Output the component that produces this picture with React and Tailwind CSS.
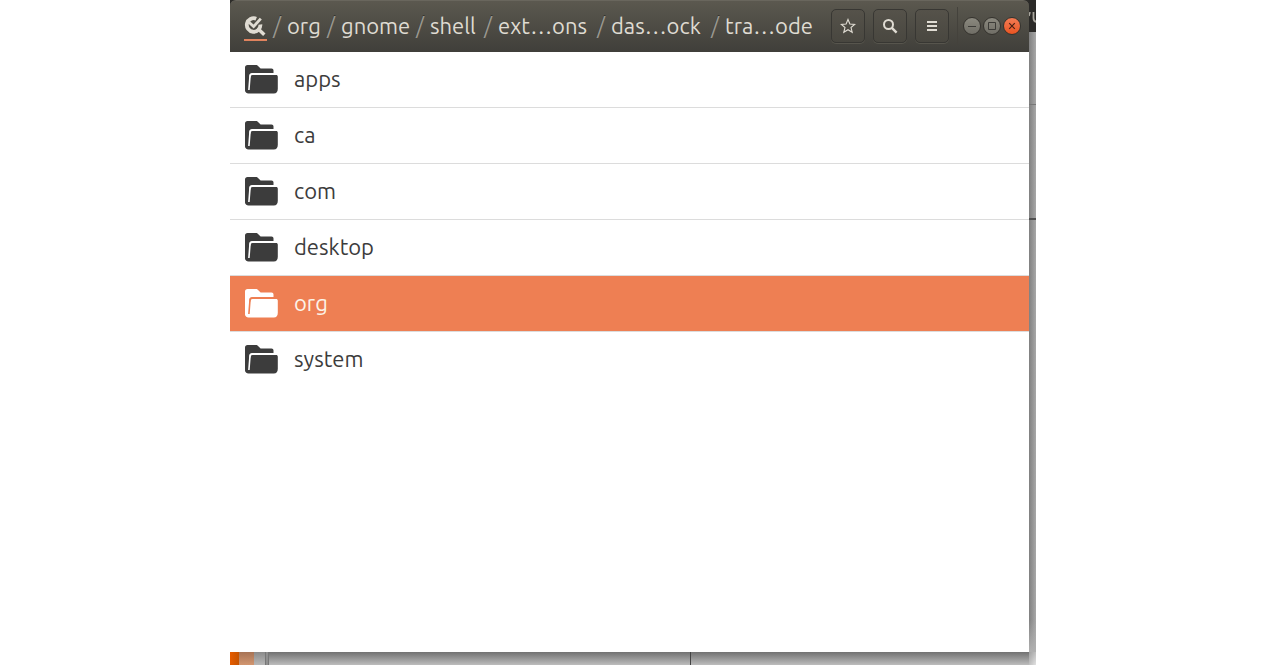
import React from "react";

const crumbs = [
  { name: "org", width: "w-[34px]" },
  { name: "gnome", width: "w-[69px]" },
  { name: "shell", width: "w-[48px]" },
  { name: "ext…ons", width: "w-[93px]" },
  { name: "das…ock", width: "w-[94px]" },
  { name: "tra…ode", width: "w-[90px]" },
];

const folders = ["apps", "ca", "com", "desktop", "org", "system"];

function RootIcon() {
  return (
    <svg viewBox="0 0 22 22" className="h-[22px] w-[22px]" fill="none" stroke="#e0dcd3" aria-hidden="true">
      <path d="M12.200 3.700A6.800 6.800 0 1 0 16.400 9.500" strokeWidth="3.800" />
      <path d="M5 7.200l4.600 4.400 7.200-8" strokeWidth="2.800" />
      <path d="M13.500 13.200l6.800 6.600" strokeWidth="3.400" />
    </svg>
  );
}

function FolderIcon({ selected }) {
  return (
    <svg
      viewBox="0 0 34 30"
      className={selected ? "h-[30px] w-[34px] shrink-0 text-white" : "h-[30px] w-[34px] shrink-0"}
      fill="currentColor"
      aria-hidden="true"
    >
      <path d="M3.500 1H12c1 0 1.500.4 2.300 1.200L16.600 4.500H27.500c1.200 0 2 .8 2 2v3H8c-1.600 0-2.500.9-2.600 2.500L4.500 28.800C2.300 28.500 1 27.200 1 25V3.500C1 2 2 1 3.500 1z" />
      <path d="M8.500 11h23.500c1.200 0 1.800.6 1.800 1.800v12c0 3-1.300 4.700-4 4.700H4.500C2.500 29.500 1 28 1 26l5.500-13c.1-1.300.8-2 2-2z" />
      <path d="M4.900 26L6 12c.1-1.400.9-2.100 2.200-2.100H32" fill="none" stroke={selected ? "#ee7f53" : "#ffffff"} strokeWidth="1.600" />
    </svg>
  );
}

function ToolButton({ label, children }) {
  return (
    <button
      aria-label={label}
      className="flex h-[34px] w-[34px] items-center justify-center rounded-[5px] border border-[#383733] bg-linear-to-b from-[#55524a] to-[#494740] text-[#e0dcd3] shadow-[0_1px_0_#57554d]"
    >
      <svg viewBox="0 0 16 16" className="h-4 w-4" fill="none" stroke="currentColor" aria-hidden="true">
        {children}
      </svg>
    </button>
  );
}

function WindowButton({ label, close, children }) {
  return (
    <button
      aria-label={label}
      className={
        close
          ? "h-[18px] w-[18px] rounded-full border border-[#35332e] bg-linear-to-b from-[#f47b53] to-[#e95420] text-[#4b2114]"
          : "h-[18px] w-[18px] rounded-full border border-[#35332e] bg-linear-to-b from-[#8b897f] to-[#706e66] text-[#3c3b37]"
      }
    >
      <svg viewBox="0 0 16 16" className="h-4 w-4" fill="none" stroke="currentColor" aria-hidden="true">
        {children}
      </svg>
    </button>
  );
}

function Header() {
  return (
    <header className="flex h-[52px] items-center rounded-t-md border-t border-[#69665d] bg-linear-to-b from-[#5b584f] to-[#403f3a] pr-2 pb-0.5 pl-3.5">
      <nav aria-label="Path" className="flex grow items-center text-[22px] leading-7 text-[#dfdbd2] [text-shadow:0_-1px_0_#35342f]">
        <button aria-label="Root" className="mt-0.5 flex h-7 w-[23px] items-start border-b-2 border-[#e0835e] pt-0.5">
          <RootIcon />
        </button>
        {crumbs.map((crumb) => (
          <React.Fragment key={crumb.name}>
            <span className="w-5 text-center leading-7 text-[#99978f]">/</span>
            <button className={`${crumb.width} text-left whitespace-nowrap`}>{crumb.name}</button>
          </React.Fragment>
        ))}
      </nav>
      <div className="flex shrink-0 gap-2">
        <ToolButton label="Bookmark">
          <path d="M8 1.500l1.900 4.500 4.800.4-3.700 3.100 1.200 4.800L8 11.700l-4.200 2.600L5 9.500 1.300 6.400 6.100 6z" strokeWidth="1.100" />
        </ToolButton>
        <ToolButton label="Search">
          <circle cx="6.500" cy="6.500" r="4.500" strokeWidth="2" />
          <path d="M9.600 9.600l5 5" strokeWidth="2.400" />
        </ToolButton>
        <ToolButton label="Menu">
          <path d="M3 4h10M3 8h10M3 12h10" strokeWidth="2" />
        </ToolButton>
      </div>
      <div className="ml-2 h-[38px] w-px shrink-0 bg-[#44423c]" />
      <div className="ml-[5px] flex shrink-0 gap-0.5">
        <WindowButton label="Minimize"><path d="M4 8.500h8" /></WindowButton>
        <WindowButton label="Maximize"><path d="M4.500 4.500h7v7h-7z" /></WindowButton>
        <WindowButton label="Close" close><path d="M5.200 5.200l5.600 5.600M10.800 5.200l-5.600 5.600" strokeWidth="1.200" /></WindowButton>
      </div>
    </header>
  );
}

export default function App() {
  return (
    <div className="min-h-screen bg-white pr-[244px] pl-[230px] font-['Ubuntu','Noto_Sans',sans-serif]">
      <div className="grid min-h-screen grid-cols-[minmax(0,1fr)_7px] grid-rows-[1fr_13px] overflow-hidden">
        <main className="flex flex-col bg-linear-to-b from-[#2d2c29] from-50% to-white to-50%">
          <Header />
          <ul className="grow bg-white">
            {folders.map((name) => (
              <li key={name} className={name === "system" ? "" : "border-b border-[#dcdcdc]"}>
                <button
                  className={
                    name === "org"
                      ? "flex h-[55px] w-full items-center gap-4 bg-[#ee7f53] pb-0.5 pl-3.5 text-[22px] leading-7 text-[#fcf3e8]"
                      : "flex h-[55px] w-full items-center gap-4 pb-0.5 pl-3.5 text-[22px] leading-7 text-[#3c3c3c]"
                  }
                >
                  <FolderIcon selected={name === "org"} />
                  {name}
                </button>
              </li>
            ))}
          </ul>
        </main>
        <div className="flex flex-col bg-linear-to-r from-[#808080] to-[#a8a8a8]">
          <div className="h-8 shrink-0 bg-[#2b2a28] pt-3">
            <svg viewBox="0 0 7 12" className="h-3 w-[7px]" fill="none" stroke="#aaa79f" aria-hidden="true">
              <path d="M0 4l1-4" strokeWidth="1.500" />
              <path d="M4.500 0v6c0 3 1.500 4 4 4" strokeWidth="1.800" />
            </svg>
          </div>
          <div className="h-[73px] shrink-0 border-b border-[#777777]" />
          <div className="h-[115px] shrink-0 border-b-2 border-[#505050]" />
          <div className="mt-auto h-8 bg-linear-to-b from-transparent to-[#b0b0b0]" />
        </div>
        <div className="flex bg-linear-to-b from-[#727272] to-[#bdbdbd]">
          <div className="w-[9px] bg-linear-to-r from-[#e65c00] to-[#c65300]" />
          <div className="w-[15px] bg-linear-to-b from-[#a77355] to-[#d29670]" />
          <div className="w-[11px] bg-linear-to-b from-[#8b8b8b] to-[#b8b8b8]" />
          <div className="w-1 border-x border-[#777777] bg-[#8f8f8f]" />
          <div className="grow-[421] border-r border-[#444444]" />
          <div className="grow-[338]" />
        </div>
        <div className="bg-linear-to-br from-[#a0a0a0] to-[#e2e2e2]" />
      </div>
    </div>
  );
}
